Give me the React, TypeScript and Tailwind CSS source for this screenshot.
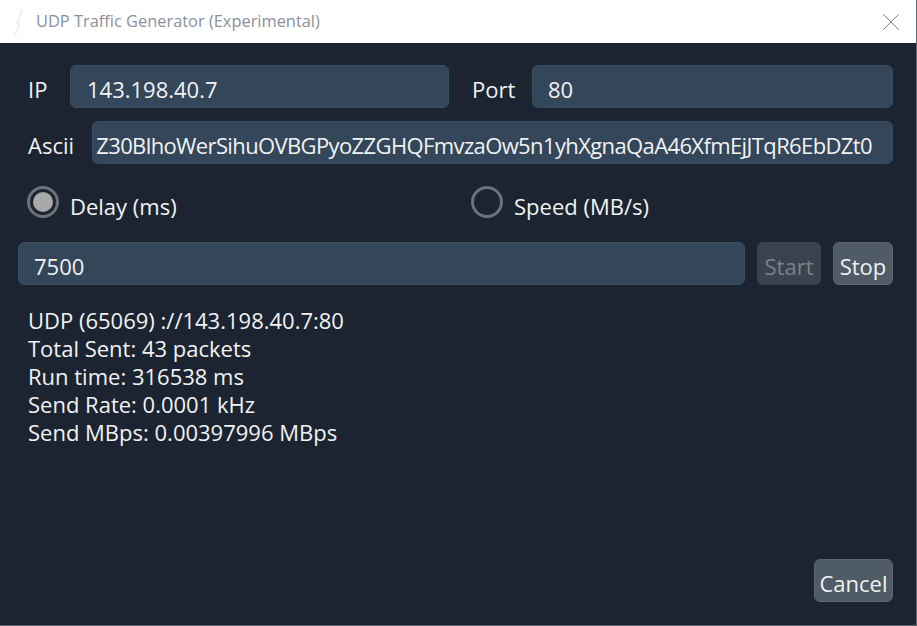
import { X } from "lucide-react";

const font = { fontFamily: '"Open Sans", "Noto Sans", sans-serif' };

const stats = [
  "UDP (65069) ://143.198.40.7:80",
  "Total Sent: 43 packets",
  "Run time: 316538 ms",
  "Send Rate: 0.0001 kHz",
  "Send MBps: 0.00397996 MBps",
];

const Field = ({ value, className = "" }: { value: string; className?: string }) => (
  <div
    className={`h-[43px] rounded-[6px] bg-[#33465a] border border-[#3a4d61] flex items-center pt-[5px] text-[22px] text-[#f2f2f2] overflow-hidden whitespace-nowrap ${className}`}
  >
    {value}
  </div>
);

const Radio = ({ checked, label }: { checked: boolean; label: string }) => (
  <div className="flex items-center gap-[11px]">
    <div className="w-[32px] h-[32px] rounded-full border-[3px] border-[#6d7178] flex items-center justify-center">
      {checked && <div className="w-[20px] h-[20px] rounded-full bg-[#a9a9aa]" />}
    </div>
    <span className="pt-[9px] text-[22px] text-[#f2f2f2]">{label}</span>
  </div>
);

export default function App() {
  return (
    <div className="w-[917px] h-[626px] flex flex-col bg-[#1b2430] border-r border-b border-[#5d646e]" style={font}>
      {/* title bar */}
      <div className="h-[43px] bg-white flex items-center shrink-0">
        <svg width="14" height="30" viewBox="0 0 14 30" className="ml-[12px]">
          <path d="M10 3 L5 17 L8 17 L3 28" stroke="#ececec" strokeWidth="1.5" fill="none" />
        </svg>
        <span className="ml-[10px] text-[16.4px] text-[#8b919c]">UDP Traffic Generator (Experimental)</span>
        <div className="ml-auto mr-[10px] text-[#808080]">
          <X size={30} strokeWidth={0.8} />
        </div>
      </div>

      {/* body */}
      <div className="flex-1 flex flex-col pr-[23px]">
        <div className="flex items-center mt-[22px] pl-[28px]">
          <span className="w-[42px] pt-[5px] text-[22px] text-[#f2f2f2]">IP</span>
          <Field value="143.198.40.7" className="w-[379px] pl-[16px]" />
          <span className="ml-[23px] w-[60px] pt-[5px] text-[22px] text-[#f2f2f2]">Port</span>
          <Field value="80" className="flex-1 pl-[15px]" />
        </div>

        <div className="flex items-center mt-[13px] pl-[28px]">
          <span className="w-[64px] pt-[5px] text-[22px] text-[#f2f2f2]">Ascii</span>
          <Field
            value="Z30BlhoWerSihuOVBGPyoZZGHQFmvzaOw5n1yhXgnaQaA46XfmEjJTqR6EbDZt0"
            className="flex-1 justify-end pr-[20px] tracking-[-0.62px]"
          />
        </div>

        <div className="flex items-center mt-[21px] pl-[27px] h-[33px]">
          <div className="w-[444px]">
            <Radio checked label="Delay (ms)" />
          </div>
          <Radio checked={false} label="Speed (MB/s)" />
        </div>

        <div className="flex items-center mt-[24px] pl-[18px]">
          <Field value="7500" className="flex-1 pl-[15px]" />
          <button className="ml-[12px] w-[64px] h-[43px] pt-[5px] rounded-[6px] bg-[#38434f] text-[22px] text-[#7b8187]">
            Start
          </button>
          <button className="ml-[12px] w-[60px] h-[43px] pt-[5px] rounded-[6px] bg-[#4f5b67] border border-[#5a6571] text-[22px] text-[#f2f2f2]">
            Stop
          </button>
        </div>

        <div className="mt-[21px] pl-[28px] flex flex-col text-[22px] leading-[28px] text-[#f2f2f2]">
          {stats.map((s) => (
            <span key={s}>{s}</span>
          ))}
        </div>

        <div className="mt-auto mb-[23px] flex justify-end">
          <button className="w-[79px] h-[43px] pt-[5px] rounded-[6px] bg-[#4f5b67] border border-[#5a6571] text-[22px] text-[#f2f2f2]">
            Cancel
          </button>
        </div>
      </div>
    </div>
  );
}
